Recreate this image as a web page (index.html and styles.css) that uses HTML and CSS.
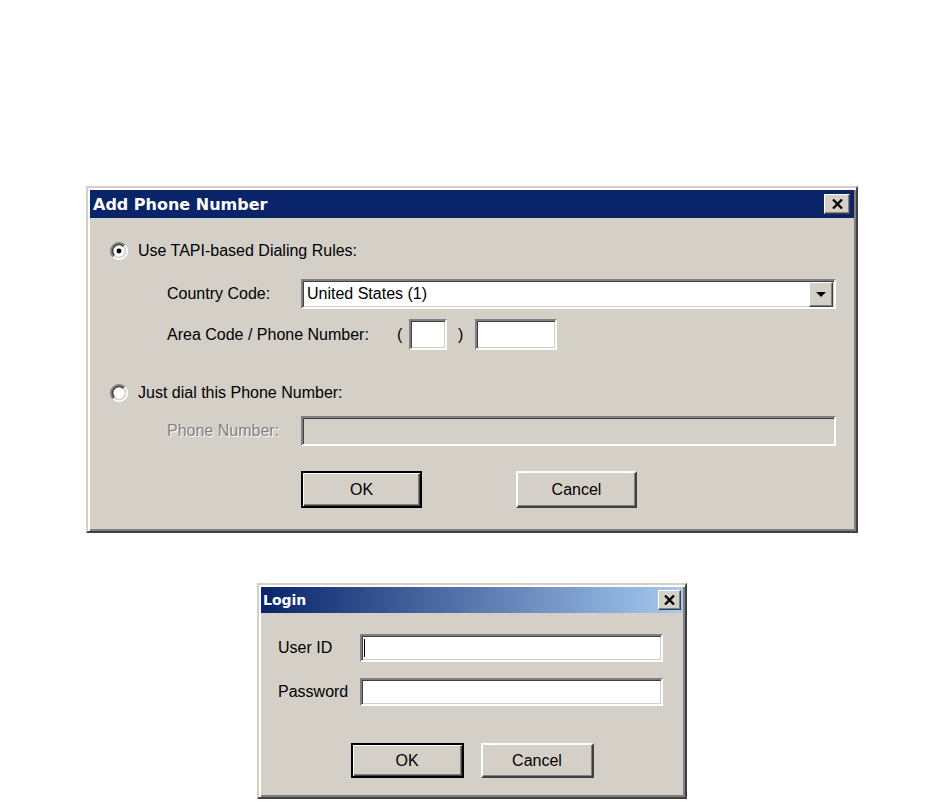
FILE: index.html
```html
<!DOCTYPE html>
<html lang="en">
<head>
    <meta charset="UTF-8">
    <meta name="viewport" content="width=device-width, initial-scale=1.0">
    <title>Phone Number and Login Dialogs</title>
    <link rel="stylesheet" href="styles.css">
</head>
<body>
    <main class="desk">
        <!-- Add Phone Number dialog -->
        <section class="window window-phone">
            <div class="titlebar">
                <span class="title">Add Phone Number</span>
                <button class="close-btn close-phone">
                    <svg width="11" height="10" viewBox="0 0 11 10"><path d="M1 0.5 L10 9.5 M10 0.5 L1 9.5" stroke="#000" stroke-width="2.3"/></svg>
                </button>
            </div>

            <div class="phone-body">
                <label class="radio-row">
                    <svg class="radio" width="18" height="18" viewBox="0 0 16 16">
                        <circle cx="8" cy="8" r="6.5" fill="#fff"/>
                        <path d="M2.87 13.13 A7.25 7.25 0 0 1 13.13 2.87" fill="none" stroke="#808080" stroke-width="1.5"/>
                        <path d="M13.13 2.87 A7.25 7.25 0 0 1 2.87 13.13" fill="none" stroke="#fff" stroke-width="1.5"/>
                        <path d="M3.93 12.07 A5.75 5.75 0 0 1 12.07 3.93" fill="none" stroke="#404040" stroke-width="1.5"/>
                        <path d="M12.07 3.93 A5.75 5.75 0 0 1 3.93 12.07" fill="none" stroke="#d4d0c8" stroke-width="1.5"/>
                        <circle cx="8" cy="8" r="2.2" fill="#000"/>
                    </svg>
                    <span>Use TAPI-based Dialing Rules:</span>
                </label>

                <div class="fields">
                    <span class="field-label">Country Code:</span>
                    <div class="field select">
                        <span class="select-value">United States (1)</span>
                        <span class="drop-btn"><i class="arrow"></i></span>
                    </div>
                    <div class="area-row">
                        <span class="area-label">Area Code / Phone Number:</span>
                        <span class="paren">(</span>
                        <span class="field box-area"></span>
                        <span class="paren paren-close">)</span>
                        <span class="field box-number"></span>
                    </div>
                </div>

                <label class="radio-row radio-second">
                    <svg class="radio" width="18" height="18" viewBox="0 0 16 16">
                        <circle cx="8" cy="8" r="6.5" fill="#fff"/>
                        <path d="M2.87 13.13 A7.25 7.25 0 0 1 13.13 2.87" fill="none" stroke="#808080" stroke-width="1.5"/>
                        <path d="M13.13 2.87 A7.25 7.25 0 0 1 2.87 13.13" fill="none" stroke="#fff" stroke-width="1.5"/>
                        <path d="M3.93 12.07 A5.75 5.75 0 0 1 12.07 3.93" fill="none" stroke="#404040" stroke-width="1.5"/>
                        <path d="M12.07 3.93 A5.75 5.75 0 0 1 3.93 12.07" fill="none" stroke="#d4d0c8" stroke-width="1.5"/>
                    </svg>
                    <span>Just dial this Phone Number:</span>
                </label>

                <div class="fields fields-single">
                    <span class="field-label disabled">Phone Number:</span>
                    <div class="field field-disabled"></div>
                </div>

                <div class="phone-buttons">
                    <button class="btn btn-default btn-phone">OK</button>
                    <button class="btn btn-phone">Cancel</button>
                </div>
            </div>
        </section>

        <!-- Login dialog -->
        <section class="window window-login">
            <div class="titlebar titlebar-fade">
                <span class="title title-small">Login</span>
                <button class="close-btn close-login">
                    <svg width="11" height="10" viewBox="0 0 11 10"><path d="M1 0.5 L10 9.5 M10 0.5 L1 9.5" stroke="#000" stroke-width="2.3"/></svg>
                </button>
            </div>

            <div class="login-body">
                <div class="login-grid">
                    <span class="field-label">User ID</span>
                    <div class="field login-field"><i class="caret"></i></div>
                    <span class="field-label">Password</span>
                    <div class="field login-field"></div>
                </div>

                <div class="login-buttons">
                    <button class="btn btn-default btn-login">OK</button>
                    <button class="btn btn-login">Cancel</button>
                </div>
            </div>
        </section>
    </main>
</body>
</html>
```

FILE: styles.css
```css
* {
    margin: 0;
    padding: 0;
    box-sizing: border-box;
}

body {
    background: #fff;
    color: #000;
    font-family: "Liberation Sans", Arial, sans-serif;
    font-size: 16px;
}

.desk {
    display: flex;
    flex-direction: column;
    align-items: center;
    gap: 50px;
    padding-top: 186px;
}

/* Window frame */
.window {
    background: #d4d0c8;
    border: 2px solid;
    border-color: #d4d0c8 #404040 #404040 #d4d0c8;
    box-shadow: inset 2px 2px #fff, inset -2px -2px #808080;
    padding: 2px;
}

.window-phone {
    width: 772px;
}

.window-login {
    width: 430px;
}

.titlebar {
    height: 28px;
    background: #0a246a;
    display: flex;
    align-items: center;
    justify-content: space-between;
    padding: 0 4px 0 3px;
}

.titlebar-fade {
    height: 26px;
    background: linear-gradient(to right, #0a246a, #a6caf0);
    padding: 0 2px 0 2px;
}

.title {
    color: #fff;
    font-family: "DejaVu Sans", Tahoma, sans-serif;
    font-weight: bold;
    font-size: 16px;
}

.title-small {
    font-size: 14px;
}

.close-btn {
    display: flex;
    align-items: center;
    justify-content: center;
    background: #d4d0c8;
    border: 1px solid;
    border-color: #fff #404040 #404040 #fff;
    box-shadow: inset -1px -1px #808080;
}

.close-phone {
    width: 26px;
    height: 20px;
}

.close-login {
    width: 23px;
    height: 20px;
}

/* Sunken fields */
.field {
    display: block;
    background: #fff;
    border: 2px solid;
    border-color: #808080 #fff #fff #808080;
    box-shadow: inset 1px 1px #404040, inset -1px -1px #d4d0c8;
}

.field-disabled {
    background: #d4d0c8;
}

.field-label.disabled {
    color: #808080;
    text-shadow: 1px 1px #fff;
}

/* Add Phone Number body */
.phone-body {
    padding: 23px 18px 21px 20px;
}

.radio-row {
    display: flex;
    align-items: center;
    gap: 10px;
    height: 20px;
}

.radio {
    flex: none;
}

.fields {
    display: grid;
    grid-template-columns: 134px 1fr;
    row-gap: 10px;
    align-items: center;
    margin: 18px 0 0 57px;
}

.fields-single {
    margin-top: 13px;
}

.select {
    height: 30px;
    display: flex;
    align-items: center;
    justify-content: space-between;
    padding: 0 1px 0 4px;
}

.drop-btn {
    width: 24px;
    height: 25px;
    background: #d4d0c8;
    border: 1px solid;
    border-color: #fff #404040 #404040 #fff;
    box-shadow: inset -1px -1px #808080;
    display: flex;
    align-items: center;
    justify-content: center;
}

.arrow {
    width: 0;
    height: 0;
    border-left: 5px solid transparent;
    border-right: 5px solid transparent;
    border-top: 5px solid #000;
}

.area-row {
    grid-column: 1 / -1;
    display: flex;
    align-items: center;
    height: 31px;
}

.area-label {
    width: 230px;
}

.paren {
    width: 12px;
}

.paren-close {
    margin-left: 11px;
    width: 17px;
}

.box-area {
    width: 38px;
    height: 31px;
}

.box-number {
    width: 82px;
    height: 31px;
}

.radio-second {
    margin-top: 33px;
}

.fields-single .field {
    height: 30px;
}

.phone-buttons {
    display: flex;
    gap: 94px;
    margin: 25px 0 0 191px;
}

/* Push buttons */
.btn {
    background: #d4d0c8;
    font-family: "Liberation Sans", Arial, sans-serif;
    font-size: 16px;
    color: #000;
    border: 2px solid;
    border-color: #fff #404040 #404040 #fff;
    box-shadow: inset -1px -1px #808080;
}

.btn-default {
    border: 2px solid #000;
    box-shadow: inset 1px 1px #fff, inset -1px -1px #404040, inset -2px -2px #808080;
}

.btn-phone {
    width: 121px;
    height: 37px;
}

.btn-login {
    width: 113px;
    height: 35px;
}

/* Login body */
.login-body {
    padding: 21px 20px 17px 17px;
}

.login-grid {
    display: grid;
    grid-template-columns: 82px 303px;
    row-gap: 16px;
    align-items: center;
}

.login-field {
    height: 28px;
    display: flex;
    align-items: center;
    padding-left: 2px;
}

.caret {
    width: 1px;
    height: 18px;
    background: #000;
}

.login-buttons {
    display: flex;
    justify-content: center;
    gap: 17px;
    margin-top: 37px;
    padding-left: 3px;
}
```
